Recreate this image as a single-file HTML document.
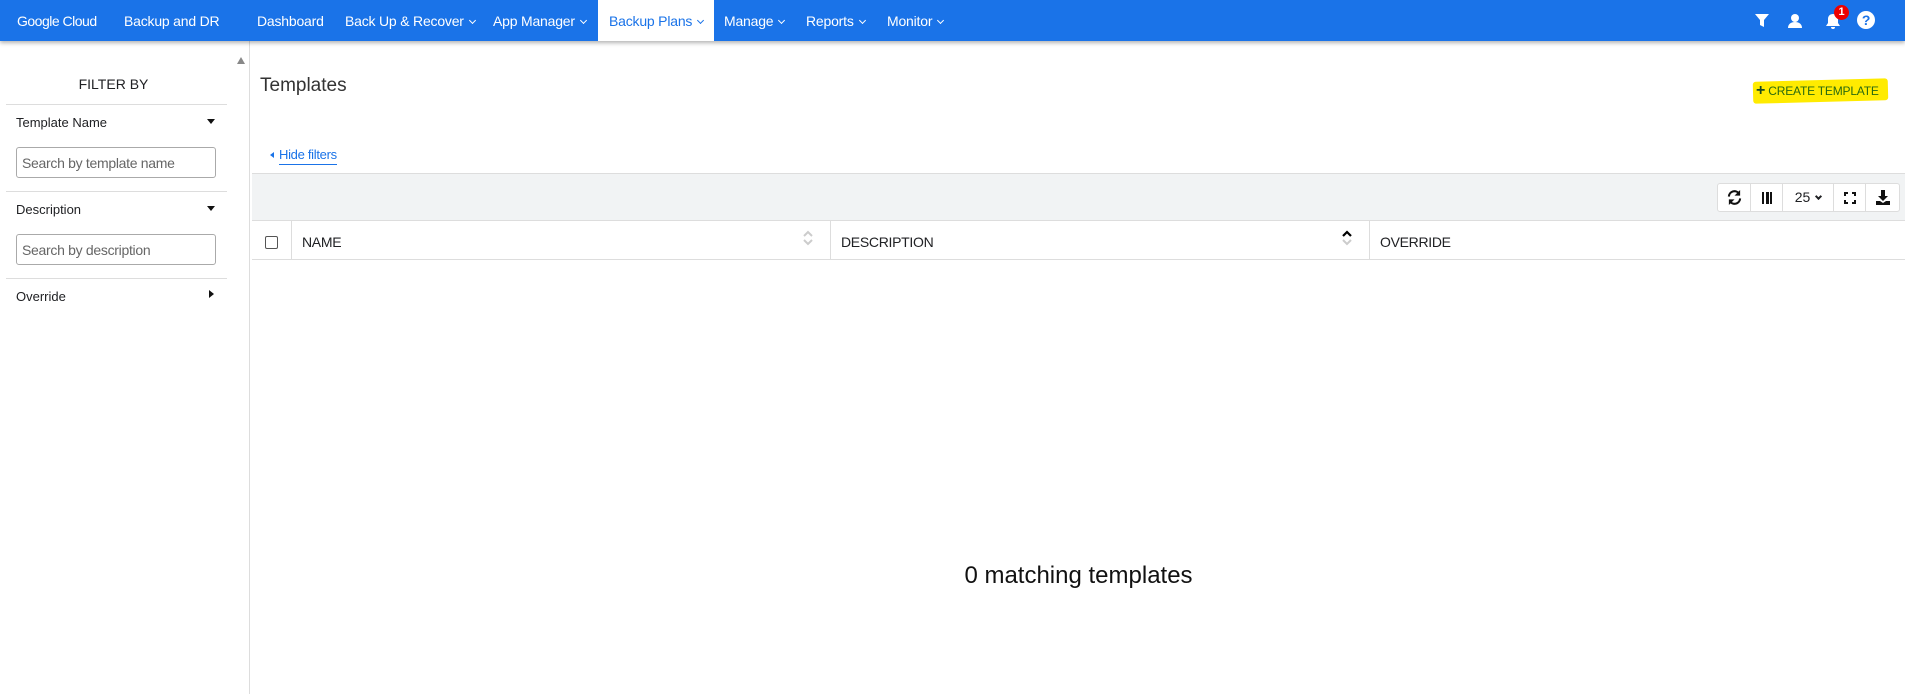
<!DOCTYPE html>
<html><head><meta charset="utf-8"><style>
*{box-sizing:border-box;margin:0;padding:0}
body{width:1905px;height:694px;overflow:hidden;background:#fff;font-family:"Liberation Sans",sans-serif;color:#202124;position:relative}
.a{position:absolute;white-space:nowrap}
.nav{position:absolute;left:0;top:0;width:1905px;height:41px;background:#1a73e8;box-shadow:0 2px 4px rgba(0,0,0,.3);z-index:2}
.nav .a{color:#fff;font-size:14px;top:13px;letter-spacing:-0.2px}
.chev{display:inline-block;width:5px;height:5px;border-right:1.8px solid currentColor;border-bottom:1.8px solid currentColor;transform:rotate(45deg);margin-left:6px;vertical-align:3px}
.side{position:absolute;left:0;top:41px;width:250px;height:653px;border-right:1px solid #ddd}
.line{position:absolute;left:6px;width:221px;height:1px;background:#ddd}
.lbl{font-size:13px;color:#202124}
.inp{position:absolute;left:16px;width:200px;height:31px;border:1px solid #aaa;border-radius:3px;font-size:14px;color:#666;padding:7px 5px;letter-spacing:-0.3px}
.tri{position:absolute;width:0;height:0}
.th{font-size:14px;top:234px;color:#202124;letter-spacing:-0.3px}
.vl{position:absolute;top:221px;height:39px;width:1px;background:#ddd}
.btn{position:absolute;top:183px;height:29px;border:1px solid #ddd;background:#fff}
.sort{position:absolute;top:229px;width:12px;height:18px}
</style></head><body>
<div class="nav">
<div class="a" style="left:17px;font-size:14px;letter-spacing:-0.5px">Google Cloud</div>
<div class="a" style="left:124px">Backup and DR</div>
<div class="a" style="left:257px">Dashboard</div>
<div class="a" style="left:345px">Back Up &amp; Recover<span class="chev"></span></div>
<div class="a" style="left:493px">App Manager<span class="chev"></span></div>
<div style="position:absolute;left:598px;top:0;width:116px;height:41px;background:#fff"></div>
<div class="a" style="left:609px;color:#1a73e8">Backup Plans<span class="chev"></span></div>
<div class="a" style="left:724px">Manage<span class="chev"></span></div>
<div class="a" style="left:806px">Reports<span class="chev"></span></div>
<div class="a" style="left:887px">Monitor<span class="chev"></span></div>
<svg class="a" style="left:1754px;top:13px" width="16" height="16" viewBox="0 0 16 16"><path d="M1 1h14l-5 6v7l-4-2V7z" fill="#fff"/></svg>
<svg class="a" style="left:1787px;top:13px" width="16" height="16" viewBox="0 0 16 16"><circle cx="8" cy="5" r="4" fill="#fff"/><path d="M1 15c0-4 3-6 7-6s7 2 7 6z" fill="#fff"/></svg>
<svg class="a" style="left:1825px;top:13px" width="16" height="17" viewBox="0 0 16 17"><path d="M8 1c3 0 5 2 5 5v4l2 3H1l2-3V6c0-3 2-5 5-5z M6 14h4a2 2 0 0 1-4 0z" fill="#fff"/></svg>
<div class="a" style="left:1834px;top:5px;width:15px;height:15px;border-radius:50%;background:#e00;color:#fff;font-size:11px;font-weight:bold;text-align:center;line-height:15px">1</div>
<div class="a" style="left:1857px;top:11px;width:18px;height:18px;border-radius:50%;background:#fff;color:#1a73e8;font-size:14px;font-weight:bold;text-align:center;line-height:18px">?</div>
</div>

<div class="side">
<div class="tri" style="left:237px;top:16px;border-left:4px solid transparent;border-right:4px solid transparent;border-bottom:7px solid #888"></div>
<div class="a" style="left:0;width:227px;text-align:center;top:35px;font-size:14px">FILTER BY</div>
<div class="line" style="top:63px"></div>
<div class="a lbl" style="left:16px;top:74px">Template Name</div>
<div class="tri" style="left:207px;top:78px;border-left:4px solid transparent;border-right:4px solid transparent;border-top:5px solid #111"></div>
<div class="inp" style="top:106px">Search by template name</div>
<div class="line" style="top:150px"></div>
<div class="a lbl" style="left:16px;top:161px">Description</div>
<div class="tri" style="left:207px;top:165px;border-left:4px solid transparent;border-right:4px solid transparent;border-top:5px solid #111"></div>
<div class="inp" style="top:193px">Search by description</div>
<div class="line" style="top:237px"></div>
<div class="a lbl" style="left:16px;top:248px">Override</div>
<div class="tri" style="left:209px;top:249px;border-top:4px solid transparent;border-bottom:4px solid transparent;border-left:5px solid #111"></div>
</div>

<div class="a" style="left:260px;top:75px;font-size:19px;color:#333">Templates</div>
<div class="a" style="left:1753px;top:80px;width:135px;height:22px;background:#ffeb00;border-radius:3px;transform:rotate(-1.5deg)"></div>
<div class="a" style="left:1756px;top:82px;font-size:12px;color:#2a6a10;letter-spacing:-0.2px"><b style="font-size:16px;color:#1a4a20">+</b> CREATE TEMPLATE</div>
<div class="tri" style="left:270px;top:152px;border-top:3px solid transparent;border-bottom:3px solid transparent;border-right:4px solid #1a73e8"></div>
<div class="a" style="left:279px;top:147px;font-size:13px;color:#1a73e8;border-bottom:1.5px solid #1a73e8;padding-bottom:2px;letter-spacing:-0.3px">Hide filters</div>

<div class="a" style="left:252px;top:173px;width:1653px;height:48px;background:#f1f3f4;border-top:1px solid #ddd;border-bottom:1px solid #ddd"></div>
<div class="btn" style="left:1717px;width:34px;border-radius:3px 0 0 3px"><svg style="position:absolute;left:9px;top:6px" width="15" height="15" viewBox="0 0 16 16"><path d="M2 7a6 6 0 0 1 11-3M14 9a6 6 0 0 1-11 3" fill="none" stroke="#111" stroke-width="2.2"/><path d="M14 0v6h-6z M2 16v-6h6z" fill="#111"/></svg></div>
<div class="btn" style="left:1750px;width:33px"><div style="position:absolute;left:11px;top:8px;width:10px;height:12px;border-left:2.5px solid #111;border-right:2.5px solid #111"></div><div style="position:absolute;left:15px;top:8px;width:2.5px;height:12px;background:#111"></div></div>
<div class="btn" style="left:1782px;width:52px;text-align:center;font-size:14px;line-height:26px">25<span class="chev" style="border-width:2px"></span></div>
<div class="btn" style="left:1833px;width:33px"><svg style="position:absolute;left:10px;top:8px" width="12" height="12" viewBox="0 0 12 12"><path d="M1 4V1h3M8 1h3v3M11 8v3H8M4 11H1V8" fill="none" stroke="#111" stroke-width="2"/></svg></div>
<div class="btn" style="left:1865px;width:35px;border-radius:0 3px 3px 0"><svg style="position:absolute;left:10px;top:6px" width="14" height="15" viewBox="0 0 14 15"><path d="M5 0h4v6h3l-5 5-5-5h3z M0 11h4l3 2 3-2h4v4H0z" fill="#111"/></svg></div>

<div class="a" style="left:252px;top:259px;width:1653px;height:1px;background:#ddd"></div>
<div class="vl" style="left:291px"></div><div class="vl" style="left:830px"></div><div class="vl" style="left:1369px"></div>
<div class="a" style="left:265px;top:236px;width:13px;height:13px;border:1.5px solid #555;border-radius:2px"></div>
<div class="a th" style="left:302px">NAME</div>
<svg class="sort" style="left:802px" viewBox="0 0 12 18"><path d="M2 7l4-4 4 4M2 11l4 4 4-4" fill="none" stroke="#ccc" stroke-width="2"/></svg>
<div class="a th" style="left:841px">DESCRIPTION</div>
<svg class="sort" style="left:1341px" viewBox="0 0 12 18"><path d="M2 7l4-4 4 4" fill="none" stroke="#000" stroke-width="2.2"/><path d="M2 11l4 4 4-4" fill="none" stroke="#ccc" stroke-width="2"/></svg>
<div class="a th" style="left:1380px">OVERRIDE</div>

<div class="a" style="left:252px;width:1653px;text-align:center;top:562px;font-size:24px;color:#111">0 matching templates</div>
</body></html>
